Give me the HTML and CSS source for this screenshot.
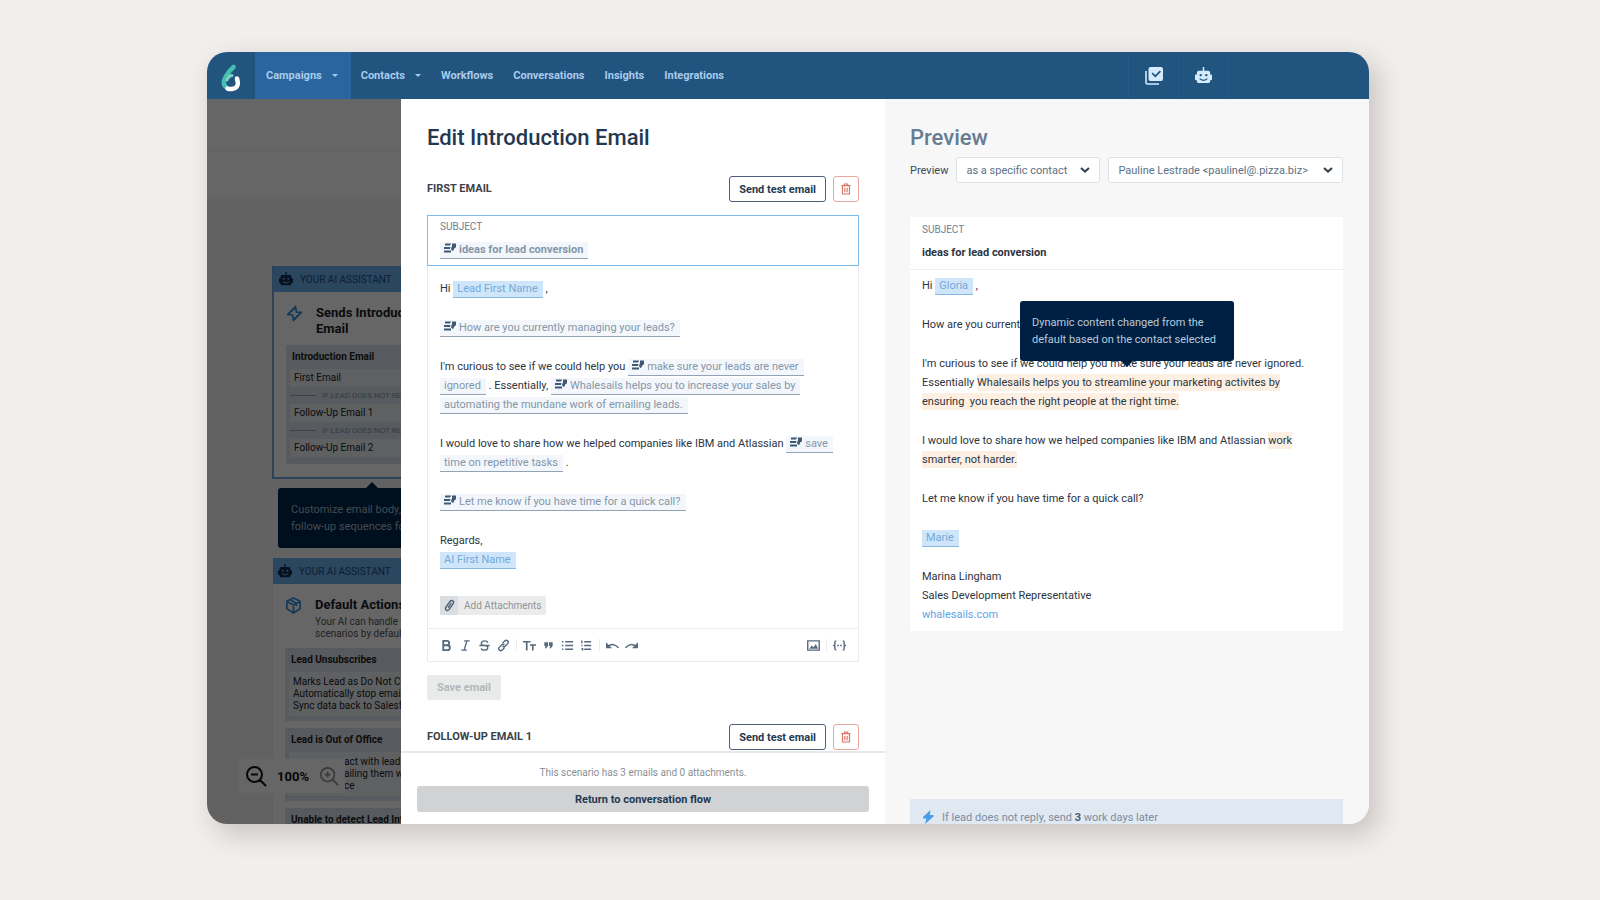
FILE: index.html
```html
<!DOCTYPE html>
<html lang="en">
<head>
<meta charset="utf-8">
<title>Edit Introduction Email</title>
<link rel="stylesheet" href="styles.css">
</head>
<body>
<svg class="defs" aria-hidden="true">
  <symbol id="dyn" viewBox="0 0 12 10"><path fill="currentColor" d="M1 .5h6.2L6 2.500H1zM0 4h6.500L6 6H0zM0 7.500h7v2H0zM8 .5h4v3.700L10.200 5.500 9.400 7.800H8.100L7 6l1-3z"/></symbol>
  <symbol id="bot" viewBox="0 0 18 18"><path fill="currentColor" fill-rule="evenodd" d="M8.200 0h1.600v4H14q2 0 2 2v2h1q1 0 1 1v4q0 1-1 1h-1v1q0 2-2 2H4q-2 0-2-2v-1H1q-1 0-1-1V9q0-1 1-1h1V6q0-2 2-2h4.200zM6 7.300a1.300 1.300 0 1 0 0 2.600 1.300 1.300 0 0 0 0-2.600zm6 0a1.300 1.300 0 1 0 0 2.600 1.300 1.300 0 0 0 0-2.600zM5 11.600q4 3.800 8 0v1.700q-4 3-8 0z"/></symbol>
  <symbol id="bolt" viewBox="0 0 18 18"><path fill="currentColor" fill-rule="evenodd" d="M10.500 0 1 9.500V11h5l1.500 7L17 8.500V7h-5zM9.500 4.500 10.500 8.500H14L8.500 13.800 7.500 9.500H4z"/></symbol>
  <symbol id="bolt-solid" viewBox="0 0 12 14"><path fill="currentColor" d="M8.500 0 1 7v1.500h3.300L3 14l8.500-7.500V5H7.800z"/></symbol>
  <symbol id="trash" viewBox="0 0 12 14"><path fill="none" stroke="currentColor" stroke-width="1.400" d="M.5 3h11M4 3V1h4v2M1.800 3v10h8.400V3M4.600 5.500v5.500M7.400 5.500v5.500"/></symbol>
  <symbol id="chev" viewBox="0 0 10 6"><path fill="none" stroke="currentColor" stroke-width="2" d="m1 1 4 3.600L9 1"/></symbol>
</svg>

<main class="window">
  <header class="topbar">
    <a class="logo" href="#" aria-label="Home">
      <svg viewBox="0 0 20 28" width="20" height="28"><path fill="none" stroke="#45bfb0" stroke-width="4.500" stroke-linecap="round" d="M12.500 3Q8 7 4.500 13Q1 20 5 23"/><path fill="none" stroke="#fff" stroke-width="4.500" stroke-linecap="round" d="M16 14.500Q19 24 11 25Q8 25.300 6.500 24.500"/><path fill="none" stroke="#7ad3c6" stroke-width="3" stroke-linecap="round" d="M6 16Q8 11.500 11 11.500"/></svg>
    </a>
    <nav class="nav">
      <a class="nav-item active" href="#">Campaigns<i class="caret"></i></a>
      <a class="nav-item" href="#">Contacts<i class="caret"></i></a>
      <a class="nav-item" href="#">Workflows</a>
      <a class="nav-item" href="#">Conversations</a>
      <a class="nav-item" href="#">Insights</a>
      <a class="nav-item" href="#">Integrations</a>
    </nav>
    <div class="tools">
      <button class="tool" aria-label="Tasks"><svg viewBox="0 0 18 18" width="18" height="18"><path fill="currentColor" fill-rule="evenodd" d="M5.500 0H16q2 0 2 2v10q0 2-2 2H5.500q-2 0-2-2V2q0-2 2-2zM6.500 6.500l3.800 4L16 4.700 14.800 3.500l-4.500 4.600-2.600-2.700z"/><path fill="none" stroke="currentColor" stroke-width="1.600" d="M1 4v11.500q0 1.500 1.500 1.500H14"/></svg></button>
      <button class="tool" aria-label="Assistant"><svg width="17" height="17"><use href="#bot"/></svg></button>
    </div>
  </header>

  <div class="columns">
    <aside class="canvas">
      <div class="canvas-bar"></div>
      <div class="flow">
        <section class="node selected">
          <div class="node-head"><svg width="14" height="14"><use href="#bot"/></svg>YOUR AI ASSISTANT</div>
          <div class="node-body">
            <div class="node-title"><svg width="17" height="17"><use href="#bolt"/></svg><h3>Sends Introduction<br>Email</h3></div>
            <div class="panel">
              <h4>Introduction Email</h4>
              <div class="row">First Email</div>
              <div class="sep">IF LEAD DOES NOT REPLY</div>
              <div class="row">Follow-Up Email 1</div>
              <div class="sep">IF LEAD DOES NOT REPLY</div>
              <div class="row">Follow-Up Email 2</div>
            </div>
          </div>
        </section>
        <div class="hint">Customize email body,<br>follow-up sequences for</div>
        <section class="node">
          <div class="node-head"><svg width="14" height="14"><use href="#bot"/></svg>YOUR AI ASSISTANT</div>
          <div class="node-body">
            <div class="node-title"><svg width="17" height="17" viewBox="0 0 18 18"><path fill="none" stroke="currentColor" stroke-width="1.800" d="M9 1l7 3.500v8L9 17l-7-4.500v-8zM2.500 5 9 8.500 15.500 5M9 8.500V17M5.500 3l6.500 3.500v3"/></svg><div><h3>Default Actions</h3><p>Your AI can handle these<br>scenarios by default</p></div></div>
            <div class="panel">
              <h4>Lead Unsubscribes</h4>
              <div class="row">Marks Lead as Do Not Contact<br>Automatically stop emailing<br>Sync data back to Salesforce</div>
            </div>
            <div class="panel">
              <h4>Lead is Out of Office</h4>
              <div class="row cut">act with lead<br>ailing them w<br>ce</div>
            </div>
            <div class="panel"><h4>Unable to detect Lead Intent</h4></div>
          </div>
        </section>
      </div>
      <div class="zoom">
        <button aria-label="Zoom out"><svg viewBox="0 0 22 22" width="22" height="22"><path fill="none" stroke="currentColor" stroke-width="2" d="M17 9.500a7.500 7.500 0 1 1-15 0 7.500 7.500 0 0 1 15 0zM15 15l6 6M6 9.500h7"/></svg></button>
        <b>100%</b>
        <button aria-label="Zoom in" disabled><svg viewBox="0 0 22 22" width="20" height="20"><path fill="none" stroke="currentColor" stroke-width="1.800" d="M17 9.500a7.500 7.500 0 1 1-15 0 7.500 7.500 0 0 1 15 0zM15 15l6 6M6.500 9.500h6M9.500 6.500v6"/></svg></button>
      </div>
      <div class="shade"></div>
    </aside>

    <section class="editor">
      <div class="editor-scroll">
        <h1>Edit Introduction Email</h1>
        <div class="email-head">
          <h2>FIRST EMAIL</h2>
          <button class="btn">Send test email</button>
          <button class="btn danger" aria-label="Delete email"><svg width="10" height="12"><use href="#trash"/></svg></button>
        </div>
        <div class="composer">
          <div class="subject">
            <span class="label">SUBJECT</span>
            <div class="subject-line"><span class="dyn"><svg><use href="#dyn"/></svg>ideas for lead conversion</span></div>
          </div>
          <div class="message">
            <p>Hi <span class="var">Lead First Name</span> ,</p>
            <p><span class="dyn"><svg><use href="#dyn"/></svg>How are you currently managing your leads?</span></p>
            <p>I'm curious to see if we could help you <span class="dyn"><svg><use href="#dyn"/></svg>make sure your leads are never<br>ignored</span> . Essentially, <span class="dyn"><svg><use href="#dyn"/></svg>Whalesails helps you to increase your sales by<br>automating the mundane work of emailing leads.</span></p>
            <p>I would love to share how we helped companies like IBM and Atlassian <span class="dyn"><svg><use href="#dyn"/></svg>save<br>time on repetitive tasks</span> .</p>
            <p><span class="dyn"><svg><use href="#dyn"/></svg>Let me know if you have time for a quick call?</span></p>
            <p>Regards,<br><span class="var">AI First Name</span></p>
          </div>
          <button class="attach"><span><svg viewBox="0 0 12 14" width="11" height="13"><path fill="none" stroke="currentColor" stroke-width="1.500" d="M10 5 5.500 11.500Q4 13 2.500 12T2 9L6.500 2.500Q8 .8 9.600 2T10 5M8 4 4.500 9.500"/></svg></span>Add Attachments</button>
          <div class="format">
            <button aria-label="Bold"><svg viewBox="0 0 14 14"><path stroke-width="2" d="M3.500 2h4a2.300 2.300 0 0 1 0 4.700h-4zM3.500 6.700h4.500a2.600 2.600 0 0 1 0 5.300H3.500z"/></svg></button>
            <button aria-label="Italic"><svg viewBox="0 0 14 14"><path d="M5.500 2h6M2.500 12h6M8.500 2l-3 10"/></svg></button>
            <button aria-label="Strikethrough"><svg viewBox="0 0 14 14"><path d="M10.500 4Q10 2 7 2T3.600 4.500 7 7t3.500 2.500T7 12 3.500 10M1.500 7h11"/></svg></button>
            <button aria-label="Link"><svg viewBox="0 0 14 14"><path d="M6 4.500 8.500 2q1.500-1.300 3 0t0 3L8.800 7.700Q7.500 9 6 7.700M8 9.500 5.500 12q-1.500 1.300-3 0t0-3L5.200 6.300Q6.500 5 8 6.300"/></svg></button>
            <i class="bar"></i>
            <button aria-label="Text size"><svg viewBox="0 0 14 14"><path stroke-width="1.800" d="M0 3h8M4 3v9.500M7.500 6.500H14M10.500 6.500v6"/></svg></button>
            <button aria-label="Quote"><svg viewBox="0 0 14 14"><path class="solid" d="M2.500 3.500h4v4L4.500 10H3l1-2.500H2.500zM7.500 3.500h4v4L9.500 10H8l1-2.500H7.500z"/></svg></button>
            <button aria-label="Bulleted list"><svg viewBox="0 0 14 14"><path d="M4.500 3H13M4.500 7H13M4.500 11H13M1 3h1.500M1 7h1.500M1 11h1.500"/></svg></button>
            <button aria-label="Numbered list"><svg viewBox="0 0 14 14"><path d="M4.500 3H12M4.500 7H12M4.500 11H12M2 1.500v3M1.500 7h1.300M1.500 10.500h1.300v2"/></svg></button>
            <i class="bar"></i>
            <button aria-label="Undo"><svg viewBox="0 0 14 14"><path d="M2 8q5.500-5 11.500 1.500"/><path class="solid" d="M0 3.500V10h6.500z"/></svg></button>
            <button aria-label="Redo"><svg viewBox="0 0 14 14"><path d="M12 8Q6.500 3 .5 9.500"/><path class="solid" d="M14 3.500V10H7.500z"/></svg></button>
            <i class="space"></i>
            <button aria-label="Insert image"><svg viewBox="0 0 14 14"><path d="M.8 2h12.400v10H.8z"/><path class="solid" d="M2.500 10.500 5 7l2 2 2.500-3.500 2.500 5z"/></svg></button>
            <i class="bar"></i>
            <button aria-label="Insert variable"><svg viewBox="0 0 14 14"><path d="M3.500 2Q2 2 2 3.500V6L.8 7 2 8v2.500Q2 12 3.500 12M10.500 2Q12 2 12 3.500V6l1.200 1L12 8v2.500q0 1.500-1.500 1.500M4.500 7h1.800M7.700 7h1.800"/></svg></button>
          </div>
        </div>
        <button class="save" disabled>Save email</button>
        <div class="email-head">
          <h2>FOLLOW-UP EMAIL 1</h2>
          <button class="btn">Send test email</button>
          <button class="btn danger" aria-label="Delete email"><svg width="10" height="12"><use href="#trash"/></svg></button>
        </div>
      </div>
      <footer class="editor-foot">
        <p>This scenario has 3 emails and 0 attachments.</p>
        <button class="return">Return to conversation flow</button>
      </footer>
    </section>

    <section class="preview">
      <h1>Preview</h1>
      <div class="pickers">
        <label for="mode">Preview</label>
        <div class="pick mode"><select id="mode"><option>as a specific contact</option></select><svg width="10" height="6"><use href="#chev"/></svg></div>
        <div class="pick who"><select aria-label="Contact"><option>Pauline Lestrade &lt;paulinel@.pizza.biz&gt;</option></select><svg width="10" height="6"><use href="#chev"/></svg></div>
      </div>
      <article class="mail">
        <div class="mail-subject"><span class="label">SUBJECT</span><b>ideas for lead conversion</b></div>
        <div class="message">
          <p>Hi <span class="var">Gloria</span> ,</p>
          <p>How are you currently managing your leads?</p>
          <p>I'm curious to see if we could help you make sure your leads are never ignored.<br>Essentially <mark>Whalesails helps you to streamline your marketing activites by<br>ensuring &nbsp;you reach the right people at the right time.</mark></p>
          <p>I would love to share how we helped companies like IBM and Atlassian <mark>work<br>smarter, not harder.</mark></p>
          <p>Let me know if you have time for a quick call?</p>
          <p><span class="var">Marie</span></p>
          <p>Marina Lingham<br>Sales Development Representative<br><a href="#">whalesails.com</a></p>
        </div>
        <div class="tip" role="tooltip">Dynamic content changed from the<br>default based on the contact selected</div>
      </article>
      <div class="delay"><svg width="12" height="14"><use href="#bolt-solid"/></svg><span>If lead does not reply, send <b>3</b> work days later</span></div>
    </section>
  </div>
</main>
</body>
</html>
```
FILE: styles.css
```css
* { box-sizing: border-box; }
body {
  margin: 0;
  min-height: 100vh;
  padding: 52px 231px 76px 207px;
  background: #f2eeeb;
  font: 11px/19px Roboto, "Open Sans", sans-serif;
  color: #2c3440;
}
h1, h2, h3, h4, p { margin: 0; }
button, select { font: inherit; color: inherit; cursor: pointer; }
button { border: 0; padding: 0; background: none; }
svg { display: block; flex: none; }
.defs { position: absolute; width: 0; height: 0; }

.window {
  display: flex;
  flex-direction: column;
  height: calc(100vh - 128px);
  min-height: 600px;
  border-radius: 20px;
  overflow: hidden;
  box-shadow: 8px 10px 24px 2px rgba(70, 62, 62, .22);
}

.topbar { display: flex; flex: none; height: 47px; background: #225480; color: #a9cbea; }
.logo { display: flex; align-items: center; justify-content: center; width: 48px; padding-top: 4px; }
.nav { display: flex; }
.nav-item {
  display: flex;
  align-items: center;
  gap: 10px;
  padding: 0 10px;
  color: inherit;
  font-weight: 700;
  text-decoration: none;
}
.nav-item.active { padding: 0 13px 0 11px; background: #2a659f; }
.caret { border: 3px solid transparent; border-top-color: currentColor; border-bottom: 0; }
.tools { display: flex; margin: 0 140px 0 auto; border-right: 1px solid #24598a; }
.tool { display: flex; align-items: center; justify-content: center; width: 50px; border-left: 1px solid #24598a; color: #d5eafc; }

.columns { display: grid; grid-template: minmax(0, 1fr) / 194px 1fr 1fr; flex: 1; min-height: 0; }

.canvas { position: relative; overflow: hidden; background: #f6f6f6; white-space: nowrap; color: #222; }
.canvas-bar { height: 100px; background: linear-gradient(#fff, #fff 52px, #f4f4f4 52px, #f4f4f4 53px, #fff 53px); }
.flow { width: 320px; padding: 67px 0 0 65px; }
.node { background: #fff; border: 1px solid #f0f2f5; border-top: 0; }
.node.selected { border: 2px solid #6ea6dd; border-top: 0; height: 213px; }
.node-head { display: flex; align-items: center; gap: 7px; height: 26px; padding-left: 5px; background: #6caeee; color: #1f4f85; font-size: 10px; }
.node-head svg { color: #0d2c50; }
.node-body { padding: 13px 12px; }
.node-title { display: flex; gap: 13px; margin-bottom: 8px; color: #3a8fdd; }
.node-title h3 { font-size: 13px; line-height: 16px; color: #1c2026; }
.node-title p { font-size: 10px; line-height: 12px; margin-top: 3px; color: #555; }
.panel { margin-bottom: 7px; padding: 0 4px 5px; background: #d9e1ec; font-size: 10px; line-height: 12px; }
.panel h4 { padding: 6px 2px; font-size: 10px; }
.selected .panel { padding-bottom: 7px; }
.row { padding: 4px; background: #edf1f6; }
.selected .row { padding: 3px 4px; }
.cut { padding-left: 55px; }
.sep { display: flex; align-items: center; gap: 6px; height: 17px; font-size: 8px; color: #8595ac; }
.sep::before { content: ""; width: 26px; border-top: 1px solid #8fa3bd; }
.hint { position: relative; margin: 9px 0 10px 6px; padding: 13px; border-radius: 3px; background: #00264a; color: #a8b8c8; line-height: 17px; }
.hint::before { content: ""; position: absolute; top: -6px; left: 88px; border: 6px solid transparent; border-top: 0; border-bottom-color: #00264a; }
.zoom { position: absolute; left: 32px; bottom: 31px; display: flex; align-items: center; gap: 10px; padding: 6px; background: #fff; font-size: 13px; color: #111; }
.zoom button:disabled { color: #8a8f94; }
.shade { position: absolute; inset: 0; background: rgba(0, 0, 0, .6); }

.editor { display: flex; flex-direction: column; min-width: 0; background: #fff; }
.editor-scroll { flex: 1; min-height: 0; overflow: hidden; padding: 25px 26px 0; }
h1 { font-size: 22px; line-height: 28px; font-weight: 500; color: #24394f; }
.email-head { display: flex; align-items: center; gap: 7px; margin: 24px 0 13px; }
.email-head h2 { flex: 1; font-size: 11px; line-height: 16px; font-weight: 700; color: #3c4148; }
.btn { display: flex; align-items: center; justify-content: center; height: 26px; padding: 0 9px; border: 1px solid #4b6078; border-radius: 3px; background: #fff; color: #24394f; font-weight: 700; }
.btn.danger { width: 26px; padding: 0; border-color: #eba79f; color: #dd7468; }
.composer { border: 1px solid #e9ebee; border-top: 0; }
.subject { margin: 0 -1px; height: 51px; padding: 4px 12px; border: 1px solid #7fbbe8; }
.label { display: block; font-size: 10px; line-height: 14px; color: #6b8096; }
.subject-line { padding-top: 6px; font-weight: 700; }
.message { padding: 13px 0 0 12px; }
.message p { margin-bottom: 20px; }
.dyn, .var { padding: 1px 5px 2px 4px; -webkit-box-decoration-break: clone; box-decoration-break: clone; border-bottom: 1px solid #92a3b5; background: #f3f7fb; color: #8496a9; }
.dyn svg { display: inline-block; width: 12px; height: 10px; margin-right: 3px; color: #3f5874; }
.var { background: #cfe6fa; border-color: #86b6e2; color: #74a9d8; }
.attach { display: flex; align-items: center; gap: 6px; height: 19px; margin: 27px 0 13px 12px; padding-right: 5px; border-radius: 2px; background: #ebebeb; color: #8f9499; font-size: 10px; }
.attach span { display: flex; align-items: center; justify-content: center; width: 18px; height: 19px; background: #d9dee3; color: #4d6072; }
.format { display: flex; align-items: center; gap: 6px; height: 33px; padding: 0 12px; border-top: 1px solid #e9ebee; color: #56697e; }
.format svg { width: 13px; height: 13px; fill: none; stroke: currentColor; stroke-width: 1.5px; }
.format .solid { fill: currentColor; stroke: none; }
.bar { width: 1px; height: 12px; background: #e9ebee; }
.space { flex: 1; }
.save { height: 25px; margin-top: 13px; padding: 0 10px; border-radius: 2px; background: #e9eaea; color: #b4b8ba; font-weight: 700; }
.editor-foot { flex: none; padding: 13px 16px 12px; border-top: 2px solid #e6e8ea; text-align: center; }
.editor-foot p { font-size: 10px; line-height: 14px; margin-bottom: 6px; color: #8a9096; }
.return { width: 100%; height: 26px; border-radius: 3px; background: #d0d2d3; color: #1f3953; font-weight: 700; }

.preview { display: flex; flex-direction: column; min-width: 0; padding: 25px 26px 0 25px; background: #f7f7f7; }
.preview h1 { color: #667c92; }
.pickers { display: flex; align-items: center; gap: 8px; margin: 5px 0 34px; color: #5d7186; }
.pickers label { color: #3c4854; }
.pick { position: relative; }
.pick.who { flex: 1; }
.pick.mode { flex: 0 0 144px; }
.pick select { display: block; width: 100%; height: 26px; padding: 0 24px 0 9px; appearance: none; border: 1px solid #dfe2e5; border-radius: 3px; background: #fff; }
.pick svg { position: absolute; right: 10px; top: 10px; color: #33404e; pointer-events: none; }
.mail { position: relative; background: #fff; padding-bottom: 7px; }
.mail-subject { padding: 6px 12px 7px; border-bottom: 1px solid #eceef0; }
.mail-subject b { display: block; margin-top: 6px; color: #2c3440; }
.mail .message { padding-top: 6px; }
.mail .message p:last-child { margin-bottom: 0; }
mark { padding: 2px 0; background: #fdf0e3; color: inherit; }
.mail a { color: #5aa5e6; text-decoration: none; }
.tip { position: absolute; left: 110px; top: 84px; padding: 13px 18px 13px 12px; border-radius: 3px; background: #002043; color: #b9cbdd; line-height: 17px; white-space: nowrap; }
.tip::after { content: ""; position: absolute; left: 50%; bottom: -6px; margin-left: -6px; border: 6px solid transparent; border-bottom: 0; border-top-color: #002043; }
.delay { display: flex; align-items: center; gap: 8px; height: 25px; margin-top: auto; padding: 11px 12px 0; background: #e0e8f2; color: #7b8da0; }
.delay svg { color: #4a9be8; }
.delay b { color: #4c5d70; }
```
